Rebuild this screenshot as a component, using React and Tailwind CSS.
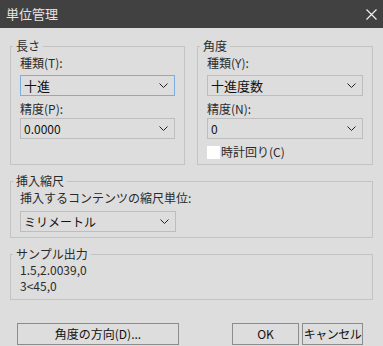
import React from "react";

const FONT = { fontFamily: '"Noto Sans CJK JP", "Noto Sans", sans-serif' };

function Chevron() {
  return (
    <svg width="9" height="5" viewBox="0 0 9 5" className="shrink-0">
      <polyline points="0.5,0.5 4.5,4.5 8.5,0.5" fill="none" stroke="#222" strokeWidth="1" />
    </svg>
  );
}

function Select({ value, focused = false, big = false, className = "" }) {
  return (
    <div
      className={`flex h-[21px] items-center justify-between border bg-[#dddddd] pl-[3px] pr-[6px] ${
        focused ? "border-[#7aaee0]" : "border-[#bdbdbd]"
      } ${className}`}
    >
      <span className={`${big ? "text-[13px]" : "text-[12px]"} leading-none text-[#111]`}>{value}</span>
      <Chevron />
    </div>
  );
}

// Windows-style group box
function Group({ title, className = "", children }) {
  return (
    <fieldset className={`border border-[#c3c3c3] px-[9px] pb-[6px] ${className}`}>
      <legend className="ml-[-7px] px-[3px] text-[12px] leading-[14px] text-[#2a2a2a]">{title}</legend>
      {children}
    </fieldset>
  );
}

function Label({ children, className = "" }) {
  return <div className={`text-[12px] leading-[14px] text-[#2a2a2a] ${className}`}>{children}</div>;
}

function Button({ children, className = "" }) {
  return (
    <button className={`flex h-[22px] items-center justify-center whitespace-nowrap border border-[#8c8c8c] bg-[#dddddd] text-[12px] text-[#111] ${className}`}>
      {children}
    </button>
  );
}

export default function App() {
  return (
    <div className="h-[346px] w-[383px] overflow-hidden bg-[#dddddd]" style={FONT}>
      {/* Title bar */}
      <div className="flex h-[28px] items-center justify-between bg-[#414141] pl-[6px] pr-[6px]">
        <span className="text-[13px] text-[#e6e6e6]">単位管理</span>
        <svg width="11" height="11" viewBox="0 0 11 11">
          <path d="M0.5 0.5 L10.5 10.5 M10.5 0.5 L0.5 10.5" stroke="#f0f0f0" strokeWidth="1.2" />
        </svg>
      </div>

      <div className="px-[10px] pt-[11px]">
        <div className="flex gap-[12px]">
          <Group title="長さ" className="h-[126px] w-[175px]">
            <Label className="mt-[3px]">種類(T):</Label>
            <Select value="十進" focused big className="mt-[5px]" />
            <Label className="mt-[6px]">精度(P):</Label>
            <Select value="0.0000" className="mt-[2px]" />
          </Group>
          <Group title="角度" className="h-[126px] w-[176px]">
            <Label className="mt-[3px]">種類(Y):</Label>
            <Select value="十進度数" big className="mt-[5px]" />
            <Label className="mt-[6px]">精度(N):</Label>
            <Select value="0" className="mt-[2px]" />
            <div className="mt-[6px] flex items-center gap-[1px]">
              <div className="h-[13px] w-[13px] bg-white" />
              <span className="text-[12px] leading-[14px] text-[#2a2a2a]">時計回り(C)</span>
            </div>
          </Group>
        </div>

        <Group title="挿入縮尺" className="mt-[9px] h-[64px]">
          <Label className="mt-[3px]">挿入するコンテンツの縮尺単位:</Label>
          <Select value="ミリメートル" className="mt-[6px] w-[156px]" />
        </Group>

        <Group title="サンプル出力" className="mt-[9px] h-[53px]">
          <div className="mt-[1px] text-[12px] leading-[16px] text-[#2a2a2a]">1.5,2.0039,0</div>
          <div className="text-[12px] leading-[16px] text-[#2a2a2a]">3&lt;45,0</div>
        </Group>

        <div className="mt-[23px] flex items-center">
          <Button className="ml-[7px] w-[162px]">角度の方向(D)...</Button>
          <Button className="ml-[53px] w-[67px]">OK</Button>
          <Button className="ml-[3px] w-[61px] text-[11px] tracking-[-0.5px]">キャンセル</Button>
        </div>
      </div>
    </div>
  );
}
